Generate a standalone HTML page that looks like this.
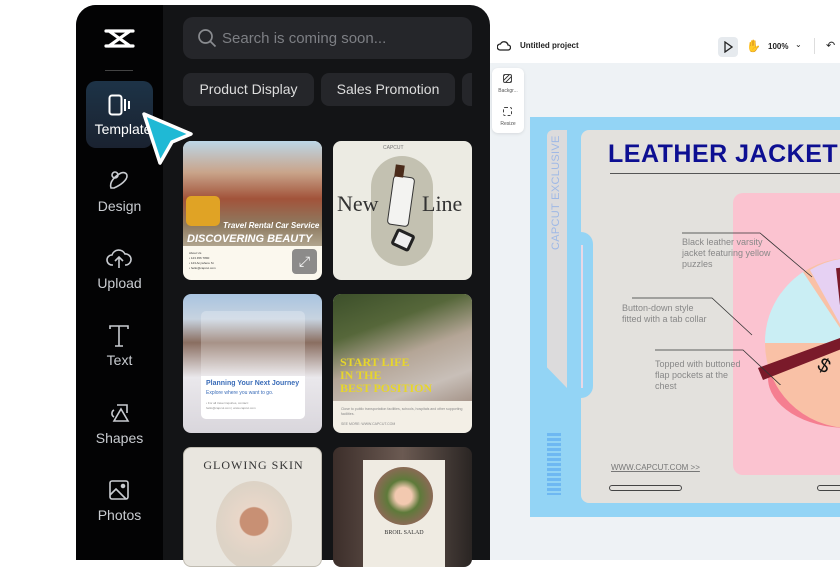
<!DOCTYPE html>
<html><head><meta charset="utf-8"><style>
*{margin:0;padding:0;box-sizing:border-box}
body{width:840px;height:560px;overflow:hidden;background:#fff;font-family:"Liberation Sans",sans-serif;position:relative}
.a{position:absolute}
.side{color:#c9ccd1;font-size:14px;text-align:center;width:87px;left:76px}
.card{position:absolute;border-radius:8px;overflow:hidden}
</style></head><body>
<!-- editor -->
<div class="a" style="left:490px;top:30px;width:350px;height:33px;background:#fff"></div>
<div class="a" style="left:490px;top:63px;width:350px;height:497px;background:#eef2f5"></div>
<svg class="a" style="left:497px;top:40px" width="14" height="12" viewBox="0 0 14 12"><path d="M3 10h8a2.5 2.5 0 0 0 0-5 4 4 0 0 0-7.5-1A3 3 0 0 0 3 10z" fill="none" stroke="#222" stroke-width="1.3"/></svg>
<div class="a" style="left:520px;top:41px;font-size:8px;font-weight:bold;color:#222">Untitled project</div>
<div class="a" style="left:718px;top:37px;width:20px;height:20px;border-radius:4px;background:#e6eaee"></div>
<svg class="a" style="left:723px;top:41px" width="10" height="12"><path d="M2 1l7 5-7 5z" fill="none" stroke="#222" stroke-width="1.3"/></svg>
<div class="a" style="left:746px;top:39px;font-size:12px;color:#222">✋</div>
<div class="a" style="left:768px;top:42px;font-size:8px;font-weight:bold;color:#222">100%</div>
<div class="a" style="left:795px;top:40px;font-size:8px;color:#222">⌄</div>
<div class="a" style="left:814px;top:38px;width:1px;height:16px;background:#ddd"></div>
<div class="a" style="left:826px;top:39px;font-size:11px;color:#222">↶</div>
<div class="a" style="left:492px;top:68px;width:32px;height:65px;background:#fff;border-radius:6px;box-shadow:0 1px 3px rgba(0,0,0,.1)"></div>
<div class="a" style="left:503px;top:74px;width:9px;height:9px;border:1px solid #444;border-radius:2px;background:repeating-linear-gradient(135deg,#444 0 1px,#fff 1px 3px)"></div>
<div class="a" style="left:494px;top:88px;width:28px;font-size:5px;color:#555;text-align:center">Backgr...</div>
<div class="a" style="left:503px;top:107px;width:9px;height:9px;border:1px dashed #444;border-radius:2px"></div>
<div class="a" style="left:494px;top:121px;width:28px;font-size:5px;color:#555;text-align:center">Resize</div>
<!-- design -->
<div class="a" style="left:530px;top:117px;width:310px;height:400px;background:#93d4f5"></div>
<div class="a" style="left:547px;top:130px;width:20px;height:258px;background:#dcdbdc;border-radius:6px 0 0 0;clip-path:polygon(0 0,100% 0,100% 100%,0 92%)"></div>
<div class="a" style="left:550px;top:250px;font-size:11px;color:#9fb9e6;transform:rotate(-90deg);transform-origin:0 0;white-space:nowrap;letter-spacing:.3px">CAPCUT EXCLUSIVE</div>
<div class="a" style="left:547px;top:433px;width:14px;height:62px;background:repeating-linear-gradient(#6eb8f2 0 3px,transparent 3px 5px)"></div>
<div class="a" style="left:581px;top:130px;width:259px;height:373px;background:#e3e1dd;border-radius:8px 0 0 8px"></div>
<div class="a" style="left:575px;top:232px;width:18px;height:166px;background:#93d4f5;border-radius:0 12px 12px 0"></div>
<div class="a" style="left:581px;top:245px;width:2px;height:143px;background:#e8d8e6"></div>
<div class="a" style="left:608px;top:140px;font-size:25px;font-weight:bold;color:#0d0f92;white-space:nowrap;letter-spacing:.5px">LEATHER JACKET</div>
<div class="a" style="left:610px;top:173px;width:230px;height:1px;background:#555"></div>
<div class="a" style="left:733px;top:193px;width:107px;height:282px;background:#fbc3d0;border-radius:10px 0 0 10px"></div>
<svg class="a" style="left:733px;top:193px" width="107" height="282">
 <ellipse cx="115" cy="185" rx="80" ry="50" fill="#f3677b" opacity=".75"/>
 <circle cx="117" cy="150" r="85" fill="#f9c1a6"/>
 <path d="M117 150 L32 150 A85 85 0 0 1 70 79 Z" fill="#caeef4"/>
 <path d="M117 150 L32 150 A85 85 0 0 1 48 100 L117 150Z" fill="#caeef4"/>
 <path d="M112 140 L77 77 A85 85 0 0 1 117 65 L117 140 Z" fill="#e6d1f3"/>
 <path d="M25 175 L107 145 L111 155 L30 187Z" fill="#7a1a2a"/>
 <path d="M105 75 L112 140" stroke="#7a1a2a" stroke-width="4"/>
 <text x="86" y="180" font-size="20" font-family="Liberation Sans" fill="#111" transform="rotate(30 93 172)">$</text>
</svg>
<svg class="a" style="left:600px;top:225px" width="240" height="160" fill="none" stroke="#333" stroke-width=".8"><path d="M82 8h78l52 44"/><path d="M32 73h80l40 37"/><path d="M55 125h88l45 42"/></svg>
<div class="a" style="left:682px;top:237px;font-size:9px;line-height:11px;color:#888">Black leather varsity<br>jacket featuring yellow<br>puzzles</div>
<div class="a" style="left:622px;top:303px;font-size:9px;line-height:11px;color:#888">Button-down style<br>fitted with a tab collar</div>
<div class="a" style="left:655px;top:359px;font-size:9px;line-height:11px;color:#888">Topped with buttoned<br>flap pockets at the<br>chest</div>
<div class="a" style="left:611px;top:463px;font-size:8px;color:#777;text-decoration:underline">WWW.CAPCUT.COM &gt;&gt;</div>
<div class="a" style="left:609px;top:485px;width:73px;height:6px;border:1.5px solid #444;border-radius:3px"></div>
<div class="a" style="left:817px;top:485px;width:30px;height:6px;border:1.5px solid #444;border-radius:3px"></div>
<!-- dark panel -->
<div class="a" style="left:76px;top:5px;width:414px;height:555px;background:#131416;border-radius:20px 20px 0 0;overflow:hidden">
 <div class="a" style="left:0;top:0;width:87px;height:555px;background:#030304"></div>
</div>
<svg class="a" style="left:104px;top:27px" width="31" height="23" viewBox="0 0 31 23"><path d="M2 4h27M2 19h27M5 4l21 15M26 4L5 19" stroke="#fff" stroke-width="3.2" fill="none" stroke-linecap="round"/></svg>
<div class="a" style="left:105px;top:70px;width:28px;height:1px;background:#444"></div>
<div class="a" style="left:86px;top:81px;width:67px;height:67px;border-radius:10px;background:linear-gradient(#1d3347,#1a2230)"></div>
<svg class="a" style="left:108px;top:94px" width="24" height="22"><rect x="1.5" y="1.5" width="12" height="19" rx="2.5" stroke="#fff" stroke-width="2" fill="none"/><path d="M17 5v12M21 7v8" stroke="#fff" stroke-width="2"/></svg>
<div class="a side" style="top:121px;color:#fff;font-size:14px;left:83px">Templates</div>
<svg class="a" style="left:136px;top:108px" width="62" height="64"><path d="M8 6 L55 26 L36 34 L24 55Z" fill="#1fb9d5" stroke="#fff" stroke-width="3.5" stroke-linejoin="round"/></svg>
<svg class="a" style="left:107px;top:168px" width="24" height="24" fill="none" stroke="#c9ccd1" stroke-width="1.6"><path d="M4 20c-2-6 4-12 10-15 3-1 6 0 6 3 0 4-6 9-13 12zM8 4a3 3 0 1 1 0 6 3 3 0 0 1 0-6z"/></svg>
<div class="a side" style="top:198px">Design</div>
<svg class="a" style="left:106px;top:246px" width="26" height="24" fill="none" stroke="#c9ccd1" stroke-width="1.6"><path d="M7 19H6a5 5 0 0 1 0-10 7 7 0 0 1 13-1 5 5 0 0 1 1 11h-1M13 22V12M9 15l4-4 4 4"/></svg>
<div class="a side" style="top:275px">Upload</div>
<svg class="a" style="left:108px;top:324px" width="22" height="24" fill="none" stroke="#c9ccd1" stroke-width="1.6"><path d="M2 5V2h18v3M11 2v20M7 22h8"/></svg>
<div class="a side" style="top:352px">Text</div>
<svg class="a" style="left:107px;top:400px" width="24" height="24" fill="none" stroke="#c9ccd1" stroke-width="1.6"><path d="M7 10a4 4 0 0 0 0 7M10 5h10v8M14 9l7 12H7z"/></svg>
<div class="a side" style="top:430px">Shapes</div>
<svg class="a" style="left:108px;top:479px" width="22" height="22" fill="none" stroke="#c9ccd1" stroke-width="1.6"><rect x="2" y="2" width="18" height="18" rx="2"/><path d="M2 16l6-6 10 10"/><circle cx="15" cy="7" r="1.5" fill="#c9ccd1"/></svg>
<div class="a side" style="top:507px">Photos</div>
<!-- search & chips -->
<div class="a" style="left:183px;top:17px;width:289px;height:42px;background:#25262a;border-radius:10px"></div>
<svg class="a" style="left:197px;top:28px" width="20" height="20" fill="none" stroke="#8a8c90" stroke-width="1.7"><circle cx="8.5" cy="8.5" r="6.5"/><path d="M13.5 13.5l5 5"/></svg>
<div class="a" style="left:222px;top:30px;font-size:15px;color:#7d7f84">Search is coming soon...</div>
<div class="a" style="left:183px;top:73px;width:131px;height:33px;background:#25262a;border-radius:8px;color:#ddd;font-size:14px;line-height:33px;text-align:center">Product Display</div>
<div class="a" style="left:321px;top:73px;width:134px;height:33px;background:#25262a;border-radius:8px;color:#ddd;font-size:14px;line-height:33px;text-align:center">Sales Promotion</div>
<div class="a" style="left:462px;top:73px;width:10px;height:33px;background:#25262a;border-radius:8px 0 0 8px"></div>
<!-- cards row1 -->
<div class="card" style="left:183px;top:141px;width:139px;height:139px;background:#fbf8ee">
 <div class="a" style="left:0;top:0;width:139px;height:105px;background:linear-gradient(180deg,#bcd6e6 0%,#c9a48a 30%,#a2533a 55%,#8d7a60 80%,#b1a58f 100%)"></div>
 <div class="a" style="left:3px;top:55px;width:34px;height:30px;background:#e0a325;border-radius:5px"></div>
 <div class="a" style="left:40px;top:80px;font-size:8px;font-style:italic;font-weight:bold;color:#fff;white-space:nowrap">Travel Rental Car Service</div>
 <div class="a" style="left:4px;top:92px;font-size:11px;font-style:italic;font-weight:bold;color:#fff;white-space:nowrap">DISCOVERING BEAUTY</div>
 <div class="a" style="left:6px;top:110px;font-size:3px;color:#333;line-height:5px">About Us<br>• 123 456 7890<br>• 123 Anywhere St<br>• hello@capcut.com</div>
 <div class="a" style="left:109px;top:108px;width:25px;height:25px;background:rgba(120,120,120,.85);border-radius:4px;color:#fff;font-size:14px;text-align:center;line-height:25px">⤢</div>
</div>
<div class="card" style="left:333px;top:141px;width:139px;height:139px;background:#ecebe3">
 <div class="a" style="left:38px;top:15px;width:62px;height:110px;border-radius:31px;background:#c3c1b1"></div>
 <div class="a" style="left:4px;top:50px;font-family:'Liberation Serif',serif;font-size:22px;color:#333">New</div>
 <div class="a" style="left:89px;top:50px;font-family:'Liberation Serif',serif;font-size:22px;color:#333">Line</div>
 <div class="a" style="left:57px;top:35px;width:22px;height:50px;background:#f3f3f1;border:1px solid #333;border-radius:4px;transform:rotate(8deg)"></div>
 <div class="a" style="left:62px;top:24px;width:9px;height:12px;background:#4a2b1a;transform:rotate(8deg)"></div>
 <div class="a" style="left:60px;top:90px;width:20px;height:18px;background:#eee;border:3px solid #222;border-radius:3px;transform:rotate(25deg)"></div>
 <div class="a" style="left:50px;top:4px;font-size:5px;color:#777">CAPCUT</div>
</div>
<!-- row2 -->
<div class="card" style="left:183px;top:294px;width:139px;height:139px;background:linear-gradient(180deg,#a9c4e0 0%,#c7d3e0 18%,#8a6e60 35%,#eae8ec 60%,#d9d6dc 100%)">
 <div class="a" style="left:18px;top:17px;width:104px;height:108px;border-radius:5px;background:rgba(255,255,255,.25)"></div>
 <div class="a" style="left:18px;top:82px;width:104px;height:43px;background:#fff;border-radius:0 0 5px 5px"></div>
 <div class="a" style="left:23px;top:86px;font-size:7px;font-weight:bold;color:#3a6cb8;white-space:nowrap">Planning Your Next Journey</div>
 <div class="a" style="left:23px;top:96px;font-size:5px;color:#3a6cb8">Explore where you want to go.</div>
 <div class="a" style="left:23px;top:107px;font-size:3px;color:#888;line-height:5px">• For all travel inquiries, contact:<br>hello@capcut.com | www.capcut.com</div>
</div>
<div class="card" style="left:333px;top:294px;width:139px;height:139px;background:#f3efe6">
 <div class="a" style="left:0;top:0;width:139px;height:107px;background:linear-gradient(160deg,#3c4f2a 0%,#56673a 30%,#b4a596 55%,#c8bfb8 80%,#a6958a 100%)"></div>
 <div class="a" style="left:7px;top:62px;font-family:'Liberation Serif',serif;font-weight:bold;font-size:12px;line-height:13px;color:#e7d62b;white-space:nowrap">START LIFE<br>IN THE<br>BEST POSITION</div>
 <div class="a" style="left:8px;top:113px;font-size:3.5px;color:#888;line-height:5px;width:125px">Close to public transportation facilities, schools, hospitals and other supporting facilities.<br><br>SEE MORE: WWW.CAPCUT.COM</div>
</div>
<!-- row3 -->
<div class="card" style="left:183px;top:447px;width:139px;height:120px;background:#e9e6df;border:1px solid #c0bcb2">
 <div class="a" style="left:0;top:10px;width:139px;text-align:center;font-family:'Liberation Serif',serif;font-size:12px;color:#333;letter-spacing:1px">GLOWING SKIN</div>
 <div class="a" style="left:32px;top:33px;width:76px;height:90px;border-radius:50%;background:radial-gradient(circle at 50% 45%,#c89074 0 22%,#e9d7c9 24%,#ddd3c6 60%)"></div>
</div>
<div class="card" style="left:333px;top:447px;width:139px;height:120px;background:linear-gradient(90deg,#3c2e2a,#6b5a52 50%,#2a2523)">
 <div class="a" style="left:30px;top:13px;width:82px;height:110px;background:#efebe2"></div>
 <div class="a" style="left:41px;top:20px;width:59px;height:58px;border-radius:50%;background:radial-gradient(circle,#f2c9b0 0 20%,#5e7a3a 40%,#8a6a55 70%,#666 100%)"></div>
 <div class="a" style="left:30px;top:83px;width:82px;text-align:center;font-family:'Liberation Serif',serif;font-size:6px;color:#333">BROIL SALAD</div>
</div>
</body></html>
